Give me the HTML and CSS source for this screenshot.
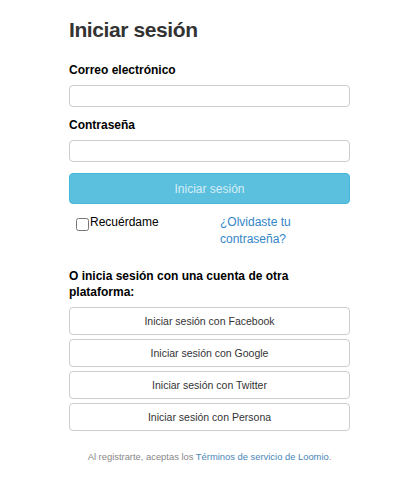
FILE: index.html
```html
<!DOCTYPE html>
<html lang="es">
<head>
<meta charset="utf-8">
<title>Iniciar sesión</title>
<link rel="stylesheet" href="styles.css">
</head>
<body>
<main class="panel">
  <h1 class="title">Iniciar sesión</h1>
  <form class="form">
    <label class="label" for="email">Correo electrónico</label>
    <input class="field" id="email" type="email">
    <label class="label label-second" for="pass">Contraseña</label>
    <input class="field" id="pass" type="password">
    <button class="submit" type="button" disabled>Iniciar sesión</button>
    <div class="extras">
      <label class="remember"><input type="checkbox" class="check">Recuérdame</label>
      <a class="forgot" href="#">¿Olvidaste tu contraseña?</a>
    </div>
  </form>
  <h2 class="other">O inicia sesión con una cuenta de otra plataforma:</h2>
  <div class="providers">
    <button class="provider" type="button">Iniciar sesión con Facebook</button>
    <button class="provider" type="button">Iniciar sesión con Google</button>
    <button class="provider" type="button">Iniciar sesión con Twitter</button>
    <button class="provider" type="button">Iniciar sesión con Persona</button>
  </div>
  <p class="terms">Al registrarte, aceptas los <a href="#">Términos de servicio de Loomio</a>.</p>
</main>
</body>
</html>
```
FILE: styles.css
```css
* { box-sizing: border-box; }
html, body { margin: 0; padding: 0; background: #fff; }
body {
  font-family: "Liberation Sans", Arial, Helvetica, sans-serif;
  color: #000;
  font-size: 12px;
  line-height: 17px;
}
.panel {
  width: 281px;
  margin-left: 69px;
  padding-top: 17px;
}
.title {
  margin: 0;
  font-size: 21px;
  line-height: 26px;
  font-weight: bold;
  letter-spacing: -0.4px;
  color: #333;
}
.form { display: flex; flex-direction: column; }
.label {
  display: block;
  font-size: 12px;
  line-height: 16px;
  font-weight: bold;
  margin: 19px 0 7px;
}
.label-second { margin-top: 10px; }
.field {
  display: block;
  width: 100%;
  height: 22px;
  border: 1px solid #ccc;
  border-radius: 4px;
  background: #fff;
  margin: 0;
  padding: 2px 6px;
  font: inherit;
}
.submit {
  margin-top: 11px;
  height: 31px;
  width: 100%;
  border: 1px solid #46b8da;
  border-radius: 4px;
  background: #5bc0de;
  color: rgba(255,255,255,0.75);
  font-family: inherit;
  font-size: 12px;
  padding: 0;
}
.extras {
  display: grid;
  grid-template-columns: 151px 1fr;
  margin-top: 10px;
}
.remember {
  display: flex;
  align-items: flex-start;
  padding-left: 7px;
}
.check {
  width: 13px;
  height: 13px;
  margin: 4px 1px 0 0;
}
.forgot {
  color: #3385c6;
  text-decoration: none;
  padding-right: 50px;
}
.other {
  margin: 20px 0 7px;
  font-size: 12px;
  line-height: 16px;
  font-weight: bold;
  padding-right: 50px;
}
.providers { display: flex; flex-direction: column; gap: 4px; }
.provider {
  height: 28px;
  width: 100%;
  border: 1px solid #ccc;
  border-radius: 4px;
  background: #fff;
  color: #333;
  font-family: inherit;
  font-size: 10.5px;
  padding: 0;
}
.terms {
  margin: 20px 0 0;
  text-align: center;
  font-size: 9.4px;
  line-height: 12px;
  color: #888;
}
.terms a { color: #4a86b8; text-decoration: none; }
```
